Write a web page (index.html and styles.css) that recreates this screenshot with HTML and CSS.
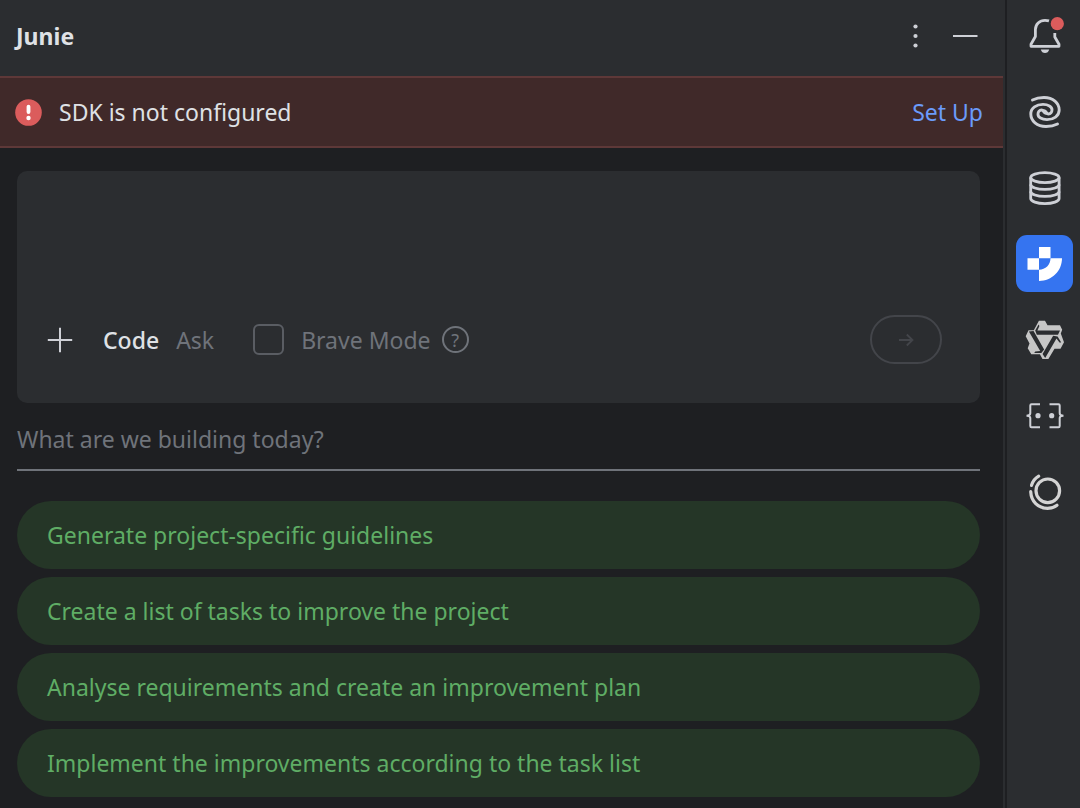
FILE: index.html
```html
<!DOCTYPE html>
<html lang="en">
<head>
    <meta charset="UTF-8">
    <title>Junie</title>
    <link rel="stylesheet" href="styles.css">
</head>
<body>
    <main class="panel">
        <header class="panel-header">
            <h1>Junie</h1>
            <div class="header-actions">
                <button class="icon-btn" aria-label="Options">
                    <svg width="28" height="28" viewBox="0 0 28 28" fill="#ced0d6">
                        <circle cx="14.5" cy="4.5" r="2.1"/>
                        <circle cx="14.5" cy="14" r="2.1"/>
                        <circle cx="14.5" cy="23.5" r="2.1"/>
                    </svg>
                </button>
                <button class="icon-btn" aria-label="Hide">
                    <svg width="28" height="28" viewBox="0 0 28 28">
                        <path d="M2 14H26.5" stroke="#ced0d6" stroke-width="2"/>
                    </svg>
                </button>
            </div>
        </header>

        <div class="banner">
            <svg width="27" height="27" viewBox="0 0 27 27">
                <circle cx="13.5" cy="13.5" r="13.3" fill="#db5c5c"/>
                <path d="M13.5 7.7V13" stroke="#fff" stroke-width="3.8" stroke-linecap="round"/>
                <circle cx="13.5" cy="19" r="2.2" fill="#fff"/>
            </svg>
            <span>SDK is not configured</span>
            <a href="#">Set Up</a>
        </div>

        <div class="content">
            <section class="composer">
                <div class="toolbar">
                    <button class="icon-btn" aria-label="Add context">
                        <svg width="26" height="26" viewBox="0 0 26 26">
                            <path d="M13 .8V25.2M.8 13H25.2" stroke="#ced0d6" stroke-width="2"/>
                        </svg>
                    </button>
                    <div class="modes">
                        <button class="mode active">Code</button>
                        <button class="mode">Ask</button>
                    </div>
                    <div class="brave">
                        <input type="checkbox" id="brave">
                        <label for="brave">Brave Mode</label>
                        <button class="help" aria-label="Help">?</button>
                    </div>
                    <button class="send" aria-label="Send">
                        <svg width="16" height="14" viewBox="0 0 16 14" fill="none" stroke="#43454a" stroke-width="1.8">
                            <path d="M1 7H14.5M8.8 1.5L14.5 7L8.8 12.5"/>
                        </svg>
                    </button>
                </div>
            </section>

            <input class="prompt" type="text" placeholder="What are we building today?" aria-label="Prompt">

            <div class="suggestions">
                <button>Generate project-specific guidelines</button>
                <button>Create a list of tasks to improve the project</button>
                <button>Analyse requirements and create an improvement plan</button>
                <button>Implement the improvements according to the task list</button>
            </div>
        </div>
    </main>

    <nav class="sidebar">
        <!-- notifications -->
        <button aria-label="Notifications">
            <svg viewBox="0 0 57 57" fill="none">
                <path d="M33 13.9C31.8 13.5 30.5 13.3 29 13.3C23.5 13.3 19.4 17.3 19.4 22.5V29.5L15 37.3V39.3H43V37.3L38.8 30V26" stroke="#ced0d6" stroke-width="2.8" stroke-linejoin="round"/>
                <path d="M24.8 42.4H33.2C32.6 44.6 31 46 29 46C27 46 25.4 44.6 24.8 42.4Z" fill="#ced0d6"/>
                <circle cx="41.3" cy="16.7" r="6.6" fill="#db5c5c"/>
            </svg>
        </button>
        <!-- assistant -->
        <button aria-label="AI Assistant">
            <svg viewBox="0 0 57 57" fill="none" stroke="#ced0d6" stroke-width="2.9" stroke-linecap="round">
                <path d="M16.5 17C20 15.2 24 14.5 28 14.5C37 14.5 43.2 20 43.2 27C43.2 33 37.5 36.6 31 36.6C25.8 36.6 22 34.4 22 31.2C22 28.7 23.5 27 25.6 27C27.6 27 27.4 29.8 30 30.4"/>
                <path d="M16.5 17C20 15.2 24 14.5 28 14.5C37 14.5 43.2 20 43.2 27C43.2 33 37.5 36.6 31 36.6C25.8 36.6 22 34.4 22 31.2C22 28.7 23.5 27 25.6 27C27.6 27 27.4 29.8 30 30.4" transform="rotate(180 29 29)"/>
            </svg>
        </button>
        <!-- database -->
        <button aria-label="Database">
            <svg viewBox="0 0 57 57" fill="none" stroke="#ced0d6" stroke-width="2.8">
                <ellipse cx="28.9" cy="18.6" rx="14.2" ry="5"/>
                <path d="M14.7 18.6V39.6C14.7 42.4 21 44.6 28.9 44.6S43.1 42.4 43.1 39.6V18.6"/>
                <path d="M14.7 25.4C14.7 28.2 21 30.4 28.9 30.4S43.1 28.2 43.1 25.4M14.7 32.4C14.7 35.2 21 37.4 28.9 37.4S43.1 35.2 43.1 32.4"/>
            </svg>
        </button>
        <!-- junie -->
        <button class="selected" aria-label="Junie">
            <svg viewBox="0 0 57 57" fill="#fff">
                <path d="M23 12H34.5V23.3H23ZM11.5 23.3H23V34.8H11.5Z"/>
                <path d="M34.5 23.3H46C46 36 36 46 23 46V34.8C29.5 34.8 34.5 29.8 34.5 23.3Z"/>
            </svg>
        </button>
        <!-- qwen -->
        <button aria-label="Qwen">
            <svg viewBox="0 0 57 57">
                <path fill="#c6c6c6" d="M22.9 9.7H29L31.5 14.3H44L46.2 18.8L44.8 22.5L48 31.2L44.5 37.8H38.5L32.4 48H26.5L23.9 43.2H15.3L11.7 37.2L13.5 32.6L9.7 25.2L12.5 19.2H17.8Z"/>
                <g fill="#2b2d30">
                    <path d="M19.2 19.6L22.6 13.4L23.4 15L21.4 19.6H44L42 23.8H20.8Z"/>
                    <path d="M19.2 19.6L22.6 13.4L23.4 15L21.4 19.6H44L42 23.8H20.8Z" transform="rotate(120 28.7 29)"/>
                    <path d="M19.2 19.6L22.6 13.4L23.4 15L21.4 19.6H44L42 23.8H20.8Z" transform="rotate(240 28.7 29)"/>
                </g>
            </svg>
        </button>
        <!-- braces -->
        <button aria-label="Snippets">
            <svg viewBox="0 0 57 57" fill="none" stroke="#ced0d6" stroke-width="2">
                <path d="M24 17.2H15.5Q14.3 17.2 14.3 18.4V26.3Q14.3 28.7 10.5 28.7Q14.3 28.7 14.3 31.1V39.1Q14.3 40.3 15.5 40.3H24M33.5 17.2H42.5Q43.7 17.2 43.7 18.4V26.3Q43.7 28.7 47.5 28.7Q43.7 28.7 43.7 31.1V39.1Q43.7 40.3 42.5 40.3H33.5"/>
                <circle cx="22" cy="28.7" r="2.6" fill="#ced0d6" stroke="none"/>
                <circle cx="35.7" cy="28.7" r="2.6" fill="#ced0d6" stroke="none"/>
            </svg>
        </button>
        <!-- rings -->
        <button aria-label="Agent">
            <svg viewBox="0 0 57 57" fill="none" stroke="#d4d4d4" stroke-width="3.2" stroke-linecap="round">
                <circle cx="31.8" cy="27.8" r="11.8"/>
                <path d="M22.7 13.2C19.2 15.2 16.7 18.4 15.5 22.4M14.7 28.7C15.2 38.5 22 45.3 31.5 45.3C35.2 45.3 38.5 44.2 41 42.2"/>
            </svg>
        </button>
    </nav>
</body>
</html>
```
FILE: styles.css
```css
* {
    box-sizing: border-box;
}
body {
    margin: 0;
    min-height: 100vh;
    display: flex;
    background: #1e1f22;
    color: #dfe1e5;
    font-family: "Noto Sans", "Open Sans", sans-serif;
    font-size: 23px;
    line-height: 32px;
}
button, input {
    font: inherit;
    color: inherit;
}
button {
    padding: 0;
    border: none;
    background: none;
    cursor: pointer;
}
svg {
    display: block;
}
.panel {
    flex: 1;
    min-width: 0;
    border-right: 2px solid #2b2d30;
}
.panel-header {
    display: flex;
    align-items: center;
    justify-content: space-between;
    height: 76px;
    padding: 0 24px 4px 16px;
    background: #2b2d30;
}
.panel-header h1 {
    margin: 0;
    font-size: 23px;
    font-weight: 700;
}
.header-actions {
    display: flex;
    gap: 22px;
}
.banner {
    display: flex;
    align-items: center;
    gap: 17px;
    height: 72px;
    padding: 0 20px 0 15px;
    background: #402929;
    border-top: 2px solid #5e3838;
    border-bottom: 2px solid #5e3838;
}
.banner a {
    margin-left: auto;
    color: #6b9bfa;
    text-decoration: none;
}
.content {
    padding: 23px 23px 10px 17px;
}
.composer {
    padding: 144px 38px 39px 30px;
    background: #2b2d30;
    border-radius: 10px;
}
.toolbar {
    display: flex;
    align-items: center;
    height: 49px;
}
.modes {
    display: flex;
    gap: 17px;
    margin-left: 30px;
}
.mode {
    color: #6f737a;
}
.mode.active {
    color: #dfe1e5;
    font-weight: 500;
}
.brave {
    display: flex;
    align-items: center;
    margin-left: 39px;
    color: #6f737a;
}
.brave input {
    appearance: none;
    width: 31px;
    height: 31px;
    margin: 0 17px 0 0;
    border: 2px solid #5a5d63;
    border-radius: 6px;
}
.help {
    width: 27px;
    height: 27px;
    margin-left: 11px;
    border: 2px solid #6f737a;
    border-radius: 50%;
    font-size: 18px;
    line-height: 22px;
}
.send {
    display: flex;
    align-items: center;
    justify-content: center;
    width: 72px;
    height: 49px;
    margin-left: auto;
    border: 2px solid #43454a;
    border-radius: 25px;
}
.prompt {
    display: block;
    width: 100%;
    height: 68px;
    padding: 6px 0 0;
    border: none;
    border-bottom: 2px solid #6f737a;
    background: none;
    outline: none;
}
.prompt::placeholder {
    color: #6f737a;
    opacity: 1;
}
.suggestions {
    display: flex;
    flex-direction: column;
    gap: 8px;
    margin-top: 30px;
}
.suggestions button {
    height: 68px;
    padding: 0 30px;
    background: #253627;
    border-radius: 34px;
    color: #5fad65;
    text-align: left;
}
.sidebar {
    display: flex;
    flex-direction: column;
    align-items: center;
    gap: 19px;
    width: 73px;
    margin-left: 2px;
    padding: 7px 0 0 2px;
    background: #2b2d30;
}
.sidebar button {
    width: 57px;
    height: 57px;
    border-radius: 11px;
}
.sidebar .selected {
    background: #3574f0;
}
```
